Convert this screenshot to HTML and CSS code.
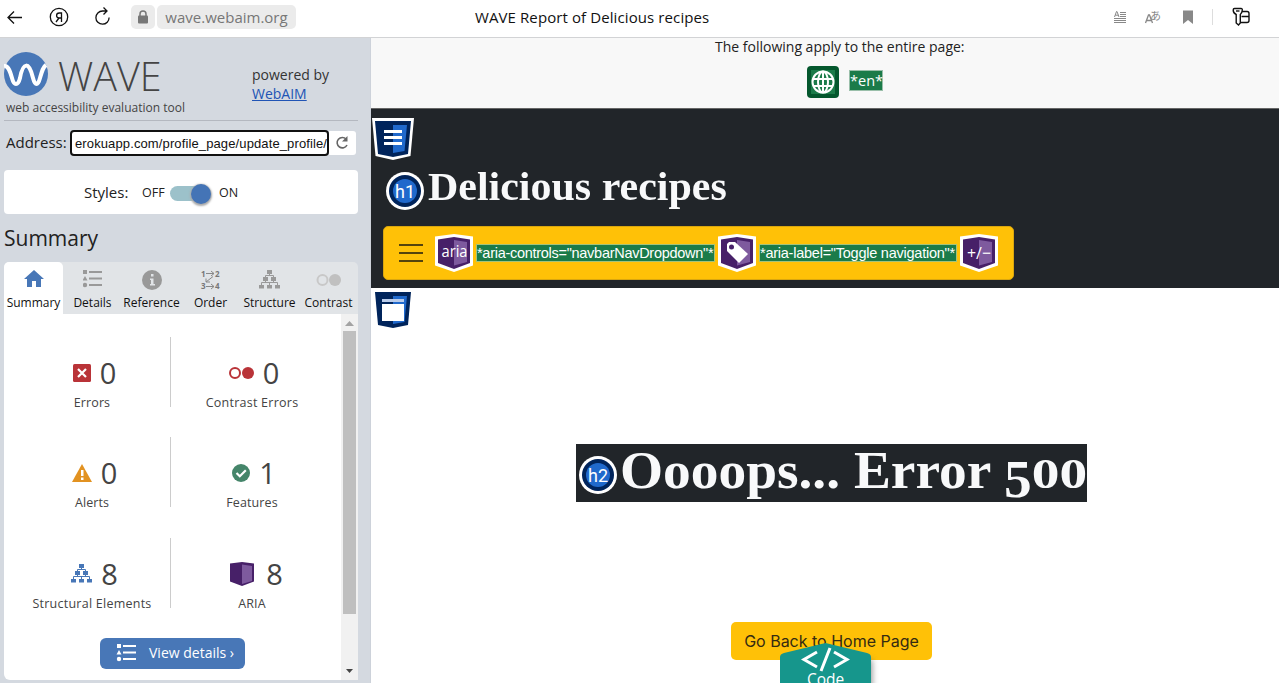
FILE: index.html
```
<!DOCTYPE html>
<html lang="en">
<head>
<meta charset="utf-8">
<title>WAVE Report of Delicious recipes</title>
<link rel="stylesheet" href="styles.css">
</head>
<body>
<svg class="defs" width="0" height="0">
  <defs>
    <g id="tree"><path d="M8 0h5v4H8zM4 7h5v4H4zM12 7h5v4h-5zM0 15h5v3.500H0zM8 15h5v3.500H8zM16 15h5v3.500h-5z"/><path d="M10.500 3v3M6.500 8V5.500h8V8M6.500 10v3M14.500 10v3M2.500 15v-2.500h16V15M10.500 13v2" fill="none" stroke="currentColor"/></g>
    <g id="list"><path d="M0 0h4v4H0zM2 6l2.500 4.500h-5zM6 1h13v2H6zM6 7.500h13v2H6zM6 14h13v2H6z"/><circle cx="2" cy="15" r="2.200"/></g>
    <g id="cube"><path d="M0 2.500 19 0l19 2.500v29L19 38 0 31.500z" fill="#fff"/><path d="M3 5.500 19 3l16 2.500v23.500l-16 6-16-6z" fill="#472068"/><path d="M19 6l13 2v20l-13 3.500z" fill="#7e5a9e"/></g>
  </defs>
</svg>
<header class="browser">
  <svg class="nav-icons" width="125" height="37" viewBox="0 0 125 37" fill="none" stroke="#111" stroke-width="1.300">
    <path d="M22 17.500H9M14 11.500l-6 6 6 6"/>
    <circle cx="59" cy="17" r="8.700"/><path d="M61.500 22v-9h-2.200c-3.600 0-3.600 5 0 5h2M59 18l-3 4"/>
    <path d="M107 11h-4.500a6.600 6.600 0 1 0 6.600 6.500M103.500 7.500l3.500 3.500-3.500 3.500"/>
  </svg>
  <span class="lock"><svg width="12" height="14" viewBox="0 0 12 14"><path d="M3 6V4a3 3 0 0 1 6 0v2" fill="none" stroke="#777" stroke-width="1.500"/><rect x="1" y="5.500" width="10" height="8" rx="1" fill="#777"/></svg></span>
  <span class="domain"><span>wave.webaim.org</span></span>
  <h1 class="page-title">WAVE Report of Delicious recipes</h1>
  <div class="tools">
    <svg width="150" height="37" viewBox="0 0 150 37" fill="none" stroke="#888">
      <path d="M20 12.500h6M20 14.500h6M20 16.500h6M14 18.500h12M14 20.500h12M14 22.500h12"/><path d="M14.500 17l2-5.500h.500l2 5.500M15.300 15.200h3"/>
      <path d="M45.500 23l3-8h1l3 8M46.500 20.500h5" stroke-width="1.300"/>
      <text x="50" y="20" class="kana">あ</text>
      <path d="M83 10.500h10V24l-5-4-5 4z" fill="#888" stroke="none"/><path d="M112.500 9v16" stroke="#ddd"/>
      <g stroke="#111" stroke-width="1.400"><path d="M134.500 8.500h6.500q1.500 0 1.300 1.500c-.300 3-1.300 4-2 4.500v8.500l-1.800 2-2.300-2v-8.500c-1.700-.700-3-2.500-3-4.500 0-1 .300-1.500 1.300-1.500z"/><path d="M136 11h3.500"/><path d="M142 11.500h5q2 0 2 2v7q0 2-2 2h-6M141.500 16.500h7.500"/></g>
    </svg>
  </div>
</header>
<div class="layout">
  <aside class="sidebar">
    <div class="brand">
      <div class="brand-main">
        <div class="logo">
          <svg width="44" height="44" viewBox="0 0 44 44"><circle cx="22" cy="22" r="22" fill="#4877b7"/><path d="M0 14C4 13 6 19 8 26c2 8 6 8 8 0 3-16 9-17 13 0 2 8 5 8 7 0 2-7 3-11 6-13" fill="none" stroke="#fff" stroke-width="4"/></svg>
          <span class="wordmark">WAVE</span>
        </div>
        <div class="tagline"><span>web accessibility evaluation tool</span></div>
      </div>
      <div class="powered"><span>powered by</span><br><a href="#">WebAIM</a></div>
    </div>
    <div class="address">
      <label>Address:</label>
      <div class="field">erokuapp.com/profile_page/update_profile/</div>
      <button class="reload"><svg width="14" height="14" viewBox="0 0 14 14" fill="none" stroke="#666" stroke-width="1.600"><path d="M11.200 3.200A5.200 5.200 0 1 0 12 9"/><path d="M12.500 0v5.500H7z" fill="#666" stroke="none"/></svg></button>
    </div>
    <div class="styles-row">
      <span class="styles-label">Styles:</span><span class="off">OFF</span><span class="switch"><i></i></span><span class="on">ON</span>
    </div>
    <h2 class="summary">Summary</h2>
    <nav class="tabs">
      <div class="tab active"><svg width="20" height="20" viewBox="0 0 20 20" fill="#4877b7"><path d="M10 0l10 9h-3v8h-5v-6H8v6H3V9H0z"/></svg><span>Summary</span></div>
      <div class="tab"><svg width="20" height="20" viewBox="0 0 20 20" fill="#999"><use href="#list"/></svg><span>Details</span></div>
      <div class="tab"><svg width="20" height="20" viewBox="0 0 20 20"><circle cx="10" cy="10" r="10" fill="#999"/><path d="M9 4h2.500v2.500H9zM8 8.500h3.500V14H13v1.500H8V14h1v-4H8z" fill="#e1e4e7"/></svg><span>Reference</span></div>
      <div class="tab"><svg width="20" height="20" viewBox="0 0 20 20" overflow="visible"><g class="digits"><text x="0" y="6.500">1</text><text x="14" y="6.500">2</text><text x="0" y="19">3</text><text x="14" y="19">4</text></g><path d="M5 3.500h8M10 1l3 2.500L10 6M5 16.500h8M10 14l3 2.500-3 2.500M12 6.500l-7 5.500M5 8.500V12h4" fill="none" stroke="#888"/></svg><span>Order</span></div>
      <div class="tab structure"><svg width="21" height="20" viewBox="0 0 21 20" fill="#999"><use href="#tree"/></svg><span>Structure</span></div>
      <div class="tab"><svg width="26" height="20" viewBox="0 0 26 20"><circle cx="6.500" cy="10" r="5" fill="none" stroke="#c8c8c8" stroke-width="2"/><circle cx="19" cy="10" r="6" fill="#c0c0c0"/></svg><span>Contrast</span></div>
    </nav>
    <div class="panel">
      <div class="results">
        <div class="grid">
          <div class="cell"><div class="count"><svg width="18" height="18" viewBox="0 0 18 18"><rect width="18" height="18" rx="1.500" fill="#b93338"/><path d="M5 5l8 8M13 5l-8 8" stroke="#fff" stroke-width="2.200"/></svg><b>0</b></div><p>Errors</p></div>
          <div class="cell"><div class="count"><svg width="25" height="14" viewBox="0 0 25 14"><circle cx="6" cy="7" r="5" fill="none" stroke="#b93338" stroke-width="2"/><circle cx="19" cy="7" r="6" fill="#b93338"/></svg><b>0</b></div><p class="wide">Contrast Errors</p></div>
          <div class="cell"><div class="count"><svg width="20" height="18" viewBox="0 0 20 18"><path d="M10 0l10 18H0z" fill="#e29221"/><path d="M9 6h2.500v6H9zM9 13.500h2.500V16H9z" fill="#fff"/></svg><b>0</b></div><p>Alerts</p></div>
          <div class="cell"><div class="count"><svg width="18" height="18" viewBox="0 0 18 18"><circle cx="9" cy="9" r="9" fill="#45856a"/><path d="M4.500 9l3.300 3.300 6-6" fill="none" stroke="#fff" stroke-width="2.200"/></svg><b>1</b></div><p>Features</p></div>
          <div class="cell"><div class="count tree-blue"><svg width="21" height="19" viewBox="0 0 21 19" fill="#4877b7"><use href="#tree"/></svg><b>8</b></div><p class="wide">Structural Elements</p></div>
          <div class="cell"><div class="count aria-count"><svg width="24" height="24" viewBox="0 0 24 24"><path d="M0 1.500L12 0l12 1.500v18L12 24 0 19.500z" fill="#472068"/><path d="M12 2.500l10 1.500v15l-10 3z" fill="#7e5a9e"/></svg><b>8</b></div><p>ARIA</p></div>
        </div>
        <button class="details"><svg width="20" height="18" viewBox="-1 0 20 18" fill="#fff"><use href="#list"/></svg><span>View details ›</span></button>
      </div>
      <div class="scrollbar"><svg width="9" height="5" viewBox="0 0 9 5"><path d="M4.500 0L9 5H0z" fill="#a3a3a3"/></svg><i></i><svg width="7" height="4" viewBox="0 0 7 4"><path d="M0 0h7L3.500 4z" fill="#444"/></svg></div>
    </div>
  </aside>
  <main class="site">
    <section class="notice">
      <p><span>The following apply to the entire page:</span></p>
      <div class="lang"><svg width="32" height="32" viewBox="0 0 32 32"><rect width="32" height="32" rx="4" fill="#04572d"/><path d="M4 4h24v24H4z" fill="#1b7b49"/><g fill="none" stroke="#fff" stroke-width="2"><circle cx="16" cy="16" r="10.500"/><ellipse cx="16" cy="16" rx="5" ry="10.500"/><path d="M16 5v22M6 13h20M6 20h20"/></g></svg><span class="mark">*en*</span></div>
    </section>
    <header class="hero">
      <svg class="landmark" width="42" height="42" viewBox="0 0 42 42"><path d="M0 0h42l-3.500 38L21 42 3.500 38z" fill="#fff"/><path d="M3 3h36l-3 33-15 3-15-3z" fill="#00245b"/><path d="M21 7h14l-2.500 26L21 35z" fill="#2069cc"/><path d="M12 12h18v3H12zM12 18h18v3H12zM12 24h18v3H12z" fill="#fff"/></svg>
      <div class="title-row"><svg width="38" height="38" viewBox="0 0 38 38"><circle cx="19" cy="19" r="19" fill="#fff"/><circle cx="19" cy="19" r="16" fill="#00245b"/><circle cx="19" cy="19" r="12" fill="#2069cc"/><text x="19" y="26" class="badge-text">h1</text></svg><h1 class="recipes">Delicious recipes</h1></div>
      <div class="navbar">
        <svg class="burger" width="24" height="18" viewBox="0 0 24 18" stroke="#55440d" stroke-width="2"><path d="M0 1h24M0 9h24M0 17h24"/></svg>
        <svg width="38" height="38" viewBox="0 0 38 38"><use href="#cube"/><text x="19.500" y="23" class="aria-text" textLength="26" lengthAdjust="spacingAndGlyphs">aria</text></svg>
        <span class="code controls">*aria-controls="navbarNavDropdown"*</span>
        <svg width="38" height="38" viewBox="0 0 38 38"><use href="#cube"/><path d="M9 10l2-2h6l13 12-9 9L9 17z" fill="#fff"/><circle cx="13.500" cy="13" r="2.500" fill="#472068"/></svg>
        <span class="code label">*aria-label="Toggle navigation"*</span>
        <svg width="38" height="38" viewBox="0 0 38 38"><use href="#cube"/><text x="19" y="25" class="aria-text" textLength="24" lengthAdjust="spacingAndGlyphs">+/−</text></svg>
      </div>
    </header>
    <section class="content">
      <svg class="main-mark" width="36" height="36" viewBox="0 0 36 36"><path d="M0 0h36l-3 33-15 3-15-3z" fill="#00245b"/><path d="M18 4h14l-2.500 26L18 32z" fill="#2069cc"/><path d="M7 7h22v3H7z" fill="#b9cbea"/><path d="M7 12h22v17H7z" fill="#fff"/></svg>
      <div class="oops-row"><svg width="38" height="38" viewBox="0 0 38 38"><circle cx="19" cy="19" r="19" fill="#fff"/><circle cx="19" cy="19" r="16" fill="#00245b"/><circle cx="19" cy="19" r="12" fill="#2069cc"/><text x="19" y="26" class="badge-text">h2</text></svg><h2 class="oops">Oooops... Error <span class="five">5</span><span class="zeros">00</span></h2></div>
      <div class="back">Go Back to Home Page</div>
      <div class="code-tab">
        <svg width="106" height="40" viewBox="0 0 106 40"><defs><filter id="shade"><feGaussianBlur stdDeviation="3"/></filter></defs><path d="M8 20q0-3 3-4L50 8l39 8q3 1 3 4v30H8z" fill="#777" opacity=".8" filter="url(#shade)"/><path d="M0 14q0-3 4-4L45.500 0 87 10q4 1 4 4v26H0z" fill="#16968c"/><path d="M37 9l-13 7.500L37 24M54 9l13 7.500L54 24M50 5l-9 23" fill="none" stroke="#fff" stroke-width="3"/></svg>
        <span>Code</span>
      </div>
    </section>
  </main>
</div>
</body>
</html>
```
FILE: styles.css
```
* { box-sizing: border-box; }
body { margin: 0; width: 1279px; height: 683px; overflow: hidden; font-family: "Open Sans", sans-serif; color: #222; background: #fff; }
svg { display: block; flex: none; }
.defs { position: absolute; }
h1, h2, p { margin: 0; font-weight: 400; }
span, b, label, a { white-space: nowrap; }
button { border: 0; padding: 0; font-family: inherit; }

.browser { height: 38px; display: flex; align-items: flex-start; border-bottom: 1px solid #d2d3d5; }
.lock, .domain { height: 24px; margin-top: 5px; display: flex; align-items: center; justify-content: center; background: #ebebeb; border-radius: 5px; color: #777; }
.lock { width: 24px; margin-left: 6px; }
.domain { width: 139px; margin-left: 2px; font-size: 15px; }
.page-title { width: 235px; margin-left: 179px; margin-top: 7px; font-size: 15px; letter-spacing: .1px; line-height: 20px; white-space: nowrap; color: #111; }
.tools { margin-left: 390px; }
.kana { font: 11px "Noto Sans CJK JP", sans-serif; fill: #888; stroke: none; }

.layout { height: 645px; display: flex; }
.sidebar { width: 371px; padding: 0 12px 3px 4px; background: #d4d9e0; display: flex; flex-direction: column; border-right: 1px solid #cdd2da; }
.brand { height: 83px; flex: none; display: flex; border-bottom: 1px solid #b4b8c0; }
.brand-main { width: 248px; padding-top: 14px; }
.logo { height: 44px; display: flex; gap: 10px; align-items: center; }
.wordmark { font-size: 39.5px; font-weight: 300; line-height: 42px; padding-top: 3px; color: #444; }
.tagline { padding-left: 2px; margin-top: 4px; font-size: 12px; line-height: 16px; color: #444; }
.powered { padding-top: 27px; font-size: 14px; line-height: 19px; color: #333; }
.powered a { color: #2054b5; }
.address { height: 49px; padding-top: 9px; display: flex; flex: none; }
.address label { width: 66px; padding-left: 2px; font-size: 15px; line-height: 25px; }
.field { width: 259px; height: 26px; border: 2px solid #111; border-radius: 4px; background: #fff; padding-left: 3px; font: 13px/23px "Liberation Sans", Arial, sans-serif; letter-spacing: .12px; color: #111; white-space: nowrap; overflow: hidden; }
.reload { width: 27px; height: 24px; margin-top: 1px; padding-left: 6px; background: #fff; border-radius: 0 3px 3px 0; }
.styles-row { height: 44px; flex: none; padding-left: 80px; background: #fff; border-radius: 4px; display: flex; align-items: center; }
.styles-label { width: 58px; font-size: 15px; }
.off { width: 28px; font-size: 12.500px; }
.on { margin-left: 8px; font-size: 12.500px; }
.switch { width: 41px; height: 15px; background: #9cc1ca; border-radius: 8px; margin-top: 3px; display: flex; align-items: center; justify-content: flex-end; }
.switch i { width: 20px; height: 20px; border-radius: 50%; background: #4474b6; box-shadow: 0 1px 2px 1px #aaa; }
.summary { height: 48px; flex: none; padding-top: 10px; font-size: 21px; line-height: 28px; }
.tabs { height: 52px; flex: none; display: grid; grid-template-columns: repeat(6, 59px); background: #e1e4e7; border-radius: 5px 5px 0 0; }
.tab { padding-top: 8px; display: flex; flex-direction: column; align-items: center; gap: 4px; font-size: 12px; line-height: 17px; color: #111; }
.tab.active { background: #fff; border-radius: 5px 5px 0 0; }
.structure { color: #999; }
.structure span { color: #111; }
.digits { font: bold 8px "Open Sans", sans-serif; fill: #777; }
.panel { height: 366px; flex: none; background: #fff; display: flex; border-radius: 0 0 0 6px; overflow: hidden; }
.results { width: 337px; padding: 23px 8px 0; display: flex; flex-direction: column; align-items: center; }
.grid { width: 321px; display: grid; grid-template-columns: 159px 162px; row-gap: 30.4px; }
.cell { height: 70px; padding-top: 18px; }
.cell:nth-child(odd) { border-right: 1px solid #ccc; }
.cell:nth-child(odd) p { padding-left: 2px; }
.cell:nth-child(odd) .count { padding-left: 7px; }
.count { height: 36px; display: flex; align-items: center; justify-content: center; gap: 9px; padding-left: 4px; }
.count b { font-size: 29px; line-height: 36px; font-weight: 400; color: #444; }
.aria-count { gap: 12px; padding-left: 9px; }
.tree-blue { color: #4877b7; }
.cell p { margin-top: 3px; text-align: center; font-size: 12.500px; line-height: 17px; color: #444; letter-spacing: .1px; }
.cell p.wide { letter-spacing: .25px; }
.details { width: 145px; height: 31px; margin-top: 30px; padding: 0 0 1px 16px; display: flex; align-items: center; gap: 13px; background: #4877b7; color: #fff; border-radius: 6px; font-size: 14px; line-height: 18px; }
.scrollbar { width: 17px; background: #f1f1f1; display: flex; flex-direction: column; align-items: center; padding-top: 7px; }
.scrollbar i { width: 13px; height: 283px; margin: 5px 0 55px; background: #bfbfbf; }

.site { width: 908px; }
.notice { height: 71px; background: #f8f8f8; border-bottom: 1px solid #666; }
.notice p { padding-left: 344px; font-size: 14px; line-height: 17px; margin-bottom: 11px; }
.lang { margin-left: 436px; display: flex; gap: 10px; align-items: flex-start; }
.mark { margin-top: 4px; border: 1px solid #9abfaa; background: #1b7b49; color: #fff; font-size: 14.500px; line-height: 19px; width: 34px; text-align: center; }
.hero { height: 179px; background: #212529; padding-top: 9px; }
.landmark { margin-left: 1px; }
.title-row { height: 66px; padding: 12px 0 0 15px; display: flex; gap: 4px; }
.badge-text { font: 18px Roboto, sans-serif; fill: #fff; text-anchor: middle; }
.recipes { margin-top: -7px; font: bold 39px/44px "Liberation Serif", serif; transform: scaleX(1.076); transform-origin: left; color: #f8f9fa; white-space: nowrap; }
.navbar { width: 631px; height: 54px; margin-left: 12px; border: 1px solid #d9a60f; border-radius: 5px; background: #ffc107; padding-left: 15px; display: flex; align-items: center; gap: 3px; }
.burger { margin-right: 9px; }
.aria-text { font: 17px "Open Sans", sans-serif; fill: #fff; text-anchor: middle; }
.code { height: 18px; flex: none; border: 1px solid #a4c37b; background: #1b7b49; color: #fff; font: 14.500px/16px "Liberation Sans", Arial, sans-serif; }
.controls { width: 239px; letter-spacing: -.28px; }
.label { width: 198px; letter-spacing: -.24px; }
.content { height: 395px; padding: 4px 0 0; }
.main-mark { margin-left: 4px; }
.oops-row { width: 511px; height: 58px; margin: 116px 0 0 205px; background: #212529; display: flex; gap: 3px; padding: 12px 0 0 3px; }
.oops { margin-top: -12px; color: #f8f9fa; font: bold 52px/54px "Liberation Serif", serif; transform: scaleX(1.065); transform-origin: left; white-space: nowrap; }
.five { display: inline-block; line-height: 40px; vertical-align: -9px; }
.zeros { display: inline-block; transform: scaleY(.8); transform-origin: 0 44px; }
.back { width: 201px; height: 38px; margin: 120px 0 0 360px; background: #ffc107; border-radius: 5px; text-align: center; font: 16px/38px Inter, sans-serif; color: #342b12; white-space: nowrap; }
.code-tab { position: absolute; left: 780px; top: 643px; width: 106px; height: 40px; overflow: hidden; }
.code-tab span { position: absolute; left: 27px; top: 26px; font-size: 15.500px; line-height: 20px; color: #fff; }
```
